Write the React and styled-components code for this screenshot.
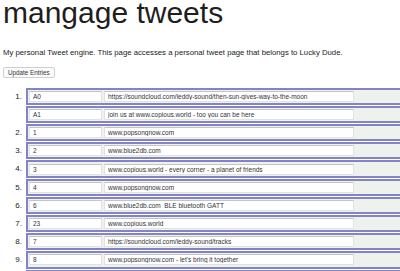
import React from "react";
import styled, { createGlobalStyle } from "styled-components";

const Global = createGlobalStyle`
  html, body { margin: 0; padding: 0; background: #fff; overflow: hidden; }
  body { font-family: "Liberation Sans", Arial, sans-serif; color: #222; }
`;

const Page = styled.div`
  padding: 0 0 0 3px;
  width: 397px;
`;

const Title = styled.h1`
  margin: 0;
  font-size: 30px;
  line-height: 25px;
  padding-bottom: 2px;
  font-weight: normal;
  color: #1e1e1e;
`;

const Intro = styled.p`
  margin: 21px 0 0;
  font-size: 7.75px;
  line-height: 9px;
  color: #222;
`;

const UpdateButton = styled.button`
  display: block;
  margin-top: 10px;
  height: 11px;
  padding: 0 4px;
  font-family: "Liberation Sans", Arial, sans-serif;
  font-size: 6.3px;
  line-height: 9px;
  color: #333;
  background: #fbfbfb;
  border: 1px solid #cfcfcf;
  border-radius: 2px;
`;

const List = styled.div`
  margin-top: 9.7px;
  display: flex;
  flex-direction: column;
`;

const Item = styled.div`
  display: flex;
  align-items: flex-start;
`;

const Num = styled.div`
  width: 19px;
  flex: none;
  text-align: right;
  padding-right: 4px;
  font-size: 8px;
  line-height: 17.2px;
  color: #222;
`;

const Rows = styled.div`
  flex: 1;
  display: flex;
  flex-direction: column;
`;

const Row = styled.div`
  box-sizing: border-box;
  height: 17.2px;
  margin-bottom: 1px;
  display: flex;
  align-items: center;
  gap: 2px;
  padding-left: 1px;
  background: #edf2ec;
  border-top: 2px solid #8383c6;
  border-bottom: 2px solid #8383c6;
  border-left: 2px solid #8383c6;
`;

const Field = styled.input`
  box-sizing: border-box;
  height: 11px;
  width: ${(p) => p.$w}px;
  margin: 0;
  padding: 0 0 0 3px;
  font-family: "Liberation Sans", Arial, sans-serif;
  font-size: 6.5px;
  color: #333;
  background: #fff;
  border: 1px solid #e2e2e2;
  border-top-color: #c4c4c4;
  outline: none;
`;

const items = [
  [
    ["A0", "https://soundcloud.com/leddy-sound/then-sun-gives-way-to-the-moon"],
    ["A1", "join us at www.copious.world - too you can be here"],
  ],
  [["1", "www.popsongnow.com"]],
  [["2", "www.blue2db.com"]],
  [["3", "www.copious.world - every corner - a planet of friends"]],
  [["4", "www.popsongnow.com"]],
  [["6", "www.blue2db.com  BLE bluetooth GATT"]],
  [["23", "www.copious.world"]],
  [["7", "https://soundcloud.com/leddy-sound/tracks"]],
  [["8", "www.popsongnow.com - let's bring it together"]],
];

export default function App() {
  return (
    <>
      <Global />
      <Page>
        <Title>mangage tweets</Title>
        <Intro>
          My personal Tweet engine. This page accesses a personal tweet page
          that belongs to Lucky Dude.
        </Intro>
        <UpdateButton type="button">Update Entries</UpdateButton>
        <List>
          {items.map((rows, i) => (
            <Item key={i}>
              <Num>{i + 1}.</Num>
              <Rows>
                {rows.map(([id, text], j) => (
                  <Row key={j}>
                    <Field $w={73} readOnly value={id} />
                    <Field $w={250} readOnly value={text} />
                  </Row>
                ))}
              </Rows>
            </Item>
          ))}
          <Item>
            <Num />
            <Rows>
              <Row />
            </Rows>
          </Item>
        </List>
      </Page>
    </>
  );
}
